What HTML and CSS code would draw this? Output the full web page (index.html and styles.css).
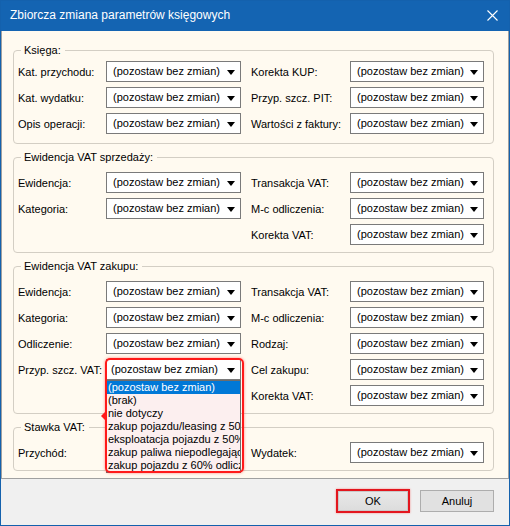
FILE: index.html
```html
<!DOCTYPE html>
<html lang="pl">
<head>
<meta charset="utf-8">
<title>Zbiorcza zmiana parametrów księgowych</title>
<link rel="stylesheet" href="styles.css">
</head>
<body>
<div class="window">
  <div class="titlebar">
    <span class="title">Zbiorcza zmiana parametrów księgowych</span>
    <svg class="close" width="11" height="11" viewBox="0 0 11 11"><path d="M0.5 0.5 L10.5 10.5 M10.5 0.5 L0.5 10.5" stroke="#fff" stroke-width="1.1" fill="none"/></svg>
  </div>
  <div class="panel">
    <fieldset class="group first">
      <legend>Księga:</legend>
      <div class="grid">
        <span class="lbl">Kat. przychodu:</span>
        <div class="combo"><span class="val">(pozostaw bez zmian)</span><span class="arrow"></span></div>
        <span class="lbl lbl2">Korekta KUP:</span>
        <div class="combo"><span class="val">(pozostaw bez zmian)</span><span class="arrow"></span></div>
        <span class="lbl">Kat. wydatku:</span>
        <div class="combo"><span class="val">(pozostaw bez zmian)</span><span class="arrow"></span></div>
        <span class="lbl lbl2">Przyp. szcz. PIT:</span>
        <div class="combo"><span class="val">(pozostaw bez zmian)</span><span class="arrow"></span></div>
        <span class="lbl">Opis operacji:</span>
        <div class="combo"><span class="val">(pozostaw bez zmian)</span><span class="arrow"></span></div>
        <span class="lbl lbl2">Wartości z faktury:</span>
        <div class="combo"><span class="val">(pozostaw bez zmian)</span><span class="arrow"></span></div>
      </div>
    </fieldset>
    <fieldset class="group">
      <legend>Ewidencja VAT sprzedaży:</legend>
      <div class="grid">
        <span class="lbl">Ewidencja:</span>
        <div class="combo"><span class="val">(pozostaw bez zmian)</span><span class="arrow"></span></div>
        <span class="lbl lbl2">Transakcja VAT:</span>
        <div class="combo"><span class="val">(pozostaw bez zmian)</span><span class="arrow"></span></div>
        <span class="lbl">Kategoria:</span>
        <div class="combo"><span class="val">(pozostaw bez zmian)</span><span class="arrow"></span></div>
        <span class="lbl lbl2">M-c odliczenia:</span>
        <div class="combo"><span class="val">(pozostaw bez zmian)</span><span class="arrow"></span></div>
        <span class="lbl lbl2 col3">Korekta VAT:</span>
        <div class="combo"><span class="val">(pozostaw bez zmian)</span><span class="arrow"></span></div>
      </div>
    </fieldset>
    <fieldset class="group">
      <legend>Ewidencja VAT zakupu:</legend>
      <div class="grid">
        <span class="lbl">Ewidencja:</span>
        <div class="combo"><span class="val">(pozostaw bez zmian)</span><span class="arrow"></span></div>
        <span class="lbl lbl2">Transakcja VAT:</span>
        <div class="combo"><span class="val">(pozostaw bez zmian)</span><span class="arrow"></span></div>
        <span class="lbl">Kategoria:</span>
        <div class="combo"><span class="val">(pozostaw bez zmian)</span><span class="arrow"></span></div>
        <span class="lbl lbl2">M-c odliczenia:</span>
        <div class="combo"><span class="val">(pozostaw bez zmian)</span><span class="arrow"></span></div>
        <span class="lbl">Odliczenie:</span>
        <div class="combo"><span class="val">(pozostaw bez zmian)</span><span class="arrow"></span></div>
        <span class="lbl lbl2">Rodzaj:</span>
        <div class="combo"><span class="val">(pozostaw bez zmian)</span><span class="arrow"></span></div>
        <span class="lbl">Przyp. szcz. VAT:</span>
        <div class="combo-wrap">
          <div class="combo open"><span class="val">(pozostaw bez zmian)</span><span class="arrow"></span></div>
          <ul class="dropdown">
            <li class="sel">(pozostaw bez zmian)</li>
            <li>(brak)</li>
            <li>nie dotyczy</li>
            <li>zakup pojazdu/leasing z 50% odliczeniem</li>
            <li>eksploatacja pojazdu z 50% odliczeniem</li>
            <li>zakup paliwa niepodlegający odliczeniu</li>
            <li>zakup pojazdu z 60% odliczeniem</li>
          </ul>
          <div class="highlight"></div>
        </div>
        <span class="lbl lbl2">Cel zakupu:</span>
        <div class="combo"><span class="val">(pozostaw bez zmian)</span><span class="arrow"></span></div>
        <span class="lbl lbl2 col3">Korekta VAT:</span>
        <div class="combo"><span class="val">(pozostaw bez zmian)</span><span class="arrow"></span></div>
      </div>
    </fieldset>
    <fieldset class="group">
      <legend>Stawka VAT:</legend>
      <div class="grid">
        <span class="lbl">Przychód:</span>
        <div class="combo"><span class="val">(pozostaw bez zmian)</span><span class="arrow"></span></div>
        <span class="lbl lbl2">Wydatek:</span>
        <div class="combo"><span class="val">(pozostaw bez zmian)</span><span class="arrow"></span></div>
      </div>
    </fieldset>
  </div>
  <div class="buttons">
    <button class="btn ok" type="button">OK</button>
    <button class="btn" type="button">Anuluj</button>
  </div>
</div>
</body>
</html>
```
FILE: styles.css
```css
* { box-sizing: border-box; }
html, body { margin: 0; padding: 0; }
body {
  font-family: "Liberation Sans", Arial, sans-serif;
  font-size: 11px;
  color: #000;
  background: #fff;
}
.window {
  width: 510px;
  height: 526px;
  border: 1px solid #1461ad;
  display: flex;
  flex-direction: column;
  background: #f0f0f0;
}
.titlebar {
  height: 30px;
  flex: none;
  background: #1464b2;
  color: #fff;
  display: flex;
  align-items: center;
  justify-content: space-between;
  padding: 0 11px 2px 9px;
}
.title {
  font-size: 12px;
  letter-spacing: 0;
}
.close { display: block; margin-top: 1px; }
.panel {
  height: 448px;
  flex: none;
  background: #fffaf0;
  border: 1px solid #a0a0a0;
  border-top: none;
  padding: 12px 14px 7px 11px;
  display: flex;
  flex-direction: column;
  gap: 6px;
}
.group {
  margin: 0;
  min-width: 0;
  border: 1px solid #d3cec4;
  border-radius: 4px;
  padding: 8px 9px 7px 4px;
}
.group.first { padding-top: 4px; padding-bottom: 9px; }
.group legend {
  margin-left: 3px;
  padding: 0 4px 0 3px;
  line-height: 14px;
  height: 14px;
  font-size: 11px;
}
.grid {
  display: grid;
  grid-template-columns: 88px 135px 109px 134px;
  grid-auto-rows: 21px;
  row-gap: 5px;
  align-items: center;
}
.lbl { white-space: nowrap; }
.lbl2 { padding-left: 10px; }
.col3 { grid-column: 3; }
.combo {
  height: 21px;
  border: 1px solid #7a7a7a;
  background: #fff;
  display: flex;
  align-items: center;
  justify-content: space-between;
  padding: 0 5px 0 6px;
  white-space: nowrap;
}
.combo .val { line-height: 13px; }
.arrow {
  width: 0;
  height: 0;
  border-left: 4.5px solid transparent;
  border-right: 4.5px solid transparent;
  border-top: 5px solid #000;
  margin-top: 1px;
}
.combo.open { padding-left: 4px; }
.combo-wrap {
  position: relative;
  height: 21px;
}
.dropdown {
  position: absolute;
  top: 21px;
  left: 0;
  width: 135px;
  margin: 0;
  padding: 0;
  list-style: none;
  background: #fcefef;
  border: 1px solid #6d6d6d;
  overflow: hidden;
  z-index: 2;
}
.dropdown li {
  height: 13px;
  line-height: 13px;
  padding-left: 1px;
  white-space: nowrap;
  overflow: hidden;
}
.dropdown li.sel {
  background: #0078d7;
  color: #fff;
}
.highlight {
  position: absolute;
  left: -1px;
  top: -1px;
  width: 139px;
  height: 115px;
  border: 2px solid #ff1a1a;
  border-radius: 5px;
  box-shadow: 0 0 3px rgba(255, 0, 0, 0.45);
  z-index: 3;
}
.highlight::before {
  content: "";
  position: absolute;
  left: -6px;
  top: 52px;
  width: 0;
  height: 0;
  border-top: 4px solid transparent;
  border-bottom: 4px solid transparent;
  border-right: 4px solid #ff1a1a;
}
.buttons {
  flex: 1;
  display: flex;
  justify-content: flex-end;
  align-items: flex-start;
  gap: 10px;
  padding: 11px 15px 0 0;
}
.btn {
  width: 74px;
  height: 22px;
  margin: 0;
  padding: 0;
  font-family: "Liberation Sans", Arial, sans-serif;
  font-size: 11px;
  color: #000;
  background: #e1e1e1;
  border: 1px solid #adadad;
}
.btn.ok {
  height: 24px;
  margin-top: -1px;
  border: 2px solid #e3161e;
  background: linear-gradient(#e9e9e9, #dcdcdc);
  box-shadow: inset 0 0 0 1px #c9c9c9, 0 0 2px rgba(255, 0, 0, 0.4);
}
```
